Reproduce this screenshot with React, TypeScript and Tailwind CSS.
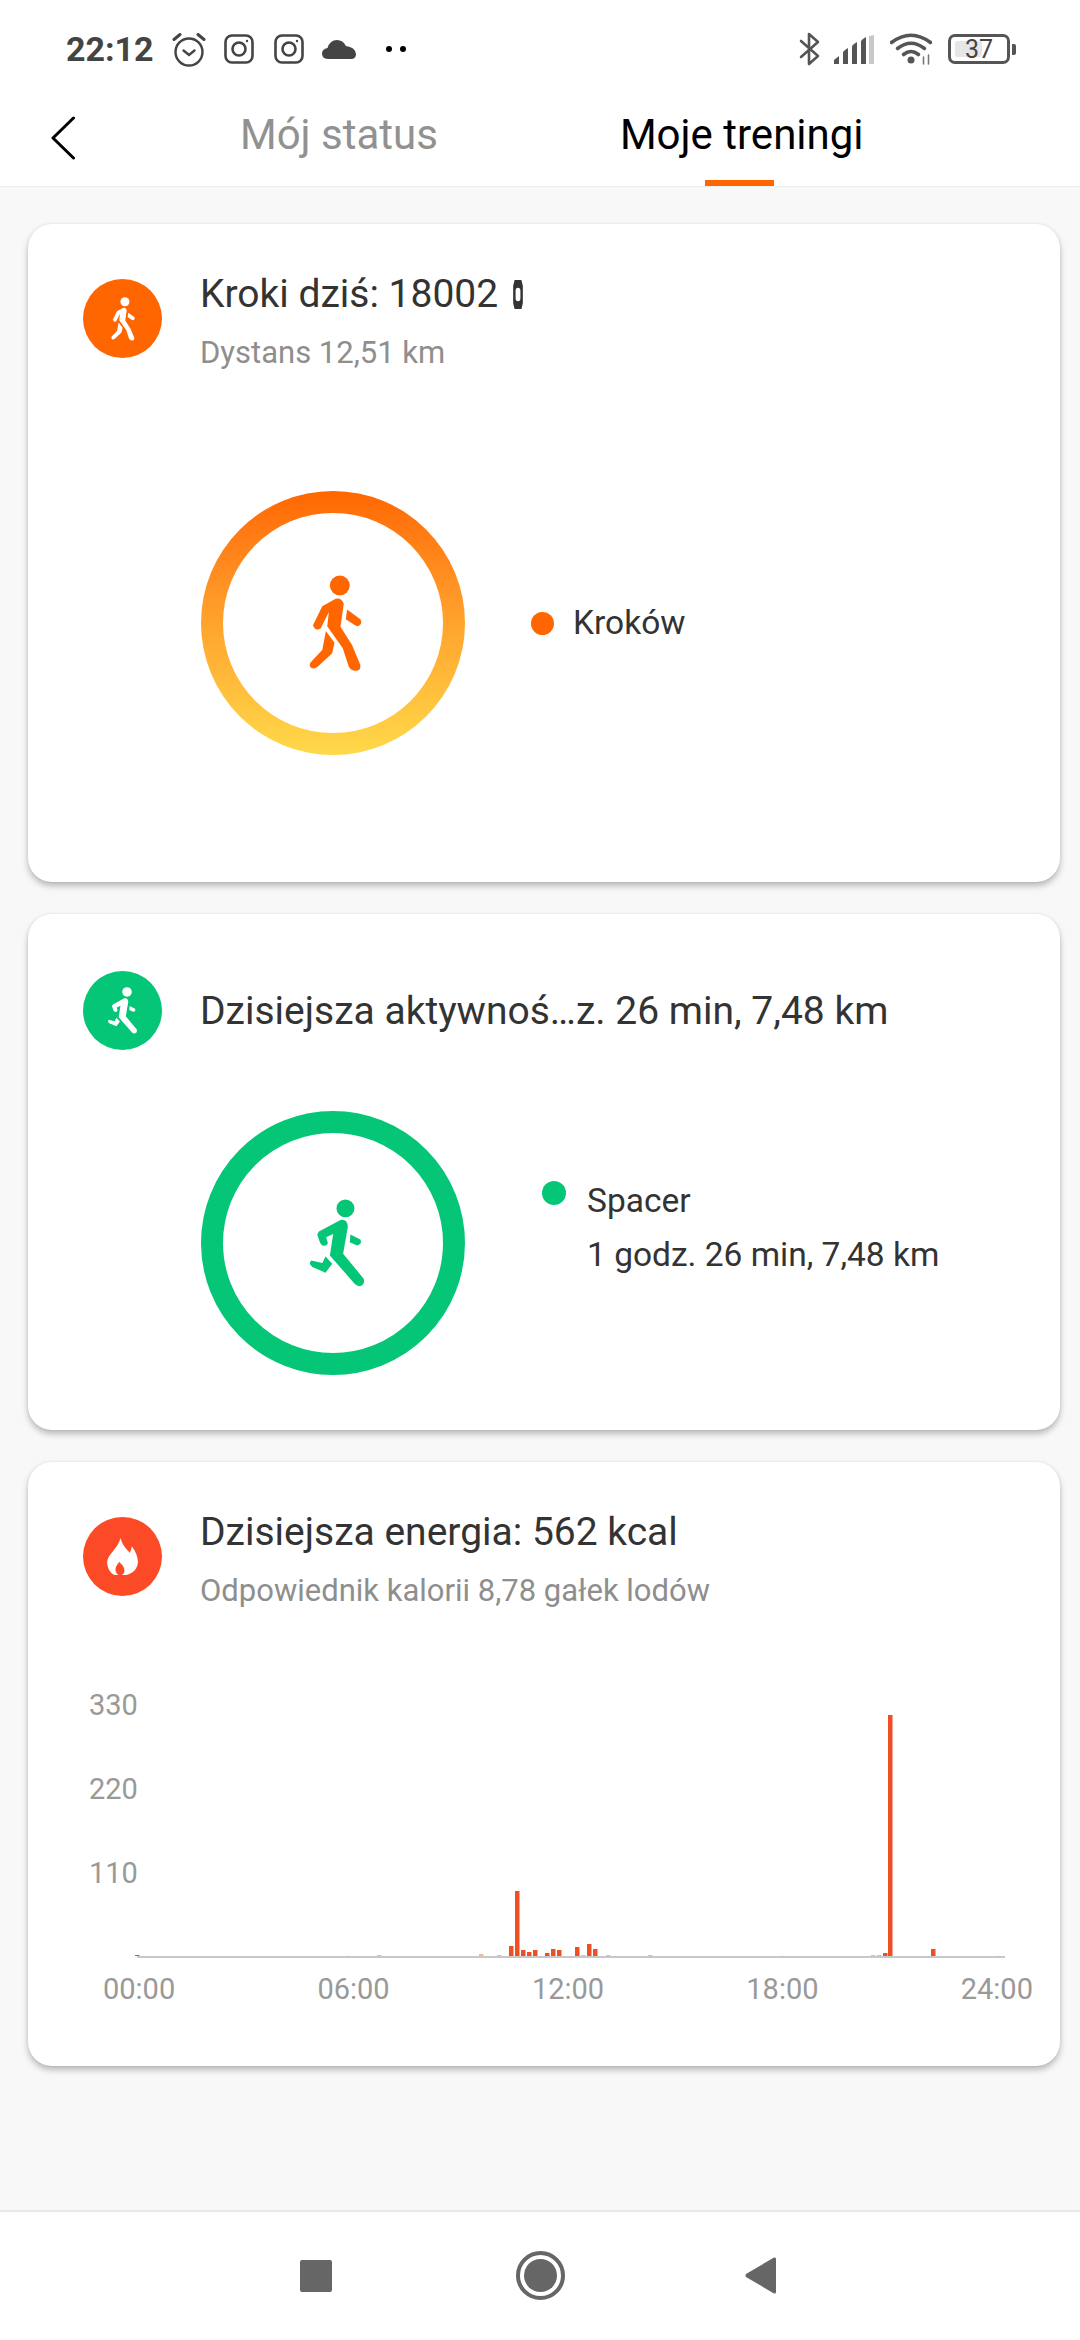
const bars: [number, number, string?][] = [
  [135, 1, '#f04e23'], [377, 1, '#f8b5a3'],
  [479, 2, '#f8b5a3'], [497, 1, '#f8b5a3'], [509, 10], [515, 65], [521, 6], [527, 4], [533, 6], [545, 3], [551, 7], [557, 6],
  [575, 9], [581, 1, '#f8b5a3'], [587, 12], [593, 7], [606, 1, '#f8b5a3'], [648, 1, '#f8b5a3'],
  [871, 1, '#f8b5a3'], [877, 1, '#f8b5a3'], [883, 3], [888, 241], [931, 7],
];

function Walker({ className, fill }: { className: string; fill: string }) {
  return (
    <svg viewBox="385 315 160 290" className={className} fill={fill}>
      <circle cx="478" cy="345" r="30" />
      <path d="M460 388Q480 378 490 400L480 470L515 525L540 585Q542 603 525 603Q512 603 505 590L487 535L440 468L445 425L420 475Q405 485 397 465L425 408Z" />
      <path d="M436 483L462 518L455 550L412 590Q395 603 387 588Q387 578 395 572L425 540Z" />
      <path d="M500 418L540 447Q548 462 532 468L525 466L496 447Z" />
    </svg>
  );
}

function Runner({ className, fill }: { className: string; fill: string }) {
  return (
    <svg viewBox="742 745 175 265" className={className} fill={fill}>
      <circle cx="855" cy="773" r="27" />
      <path d="M775 843L840 808Q862 805 862 830L848 910L910 985Q915 1005 897 1008Q888 1007 882 1000L808 915L818 850L797 860L802 878Q798 888 785 885Q778 880 776 870L770 852Z" />
      <path d="M795 918L815 940L795 967L755 950Q742 940 752 930L785 938Z" />
      <path d="M870 852L900 867Q907 880 890 885L868 875Z" />
    </svg>
  );
}

function Instagram() {
  return (
    <svg viewBox="0 0 30 30" className="w-[30px] h-[30px]" fill="none" stroke="#444" strokeWidth="2.6">
      <rect x="1.5" y="1.5" width="27" height="27" rx="6.5" />
      <circle cx="15" cy="15" r="6.5" />
      <circle cx="23" cy="7" r="1.2" fill="#444" stroke="none" />
    </svg>
  );
}

function StatusBar() {
  return (
    <div className="h-[98px] flex items-center pl-[66px] pr-[64px] justify-between">
      <div className="flex items-center">
        <span className="text-[34px] font-bold leading-none text-[#444] w-[106px]">22:12</span>
        <svg viewBox="0 0 34 35" className="w-[34px] h-[35px]" fill="none" stroke="#444" strokeWidth="2.4" strokeLinecap="round">
          <circle cx="17" cy="20" r="13.5" />
          <path d="M11.5 18.5L17 23L22.5 18.5" />
          <path d="M2 7.5L8 2.5M32 7.5L26 2.5" strokeWidth="3" />
        </svg>
        <div className="ml-[18px]"><Instagram /></div>
        <div className="ml-[20px]"><Instagram /></div>
        <svg viewBox="0 0 34 20" className="ml-[18px] w-[34px] h-[20px]" fill="#444">
          <path d="M7 20Q0 20 0 14.5Q0 10 5.5 9Q8 1 15 1Q21 1 24 7Q33 8 34 15Q34 20 29 20Z" />
        </svg>
        <div className="ml-[30px] flex gap-[8px]">
          <div className="w-[6px] h-[6px] rounded-full bg-black" />
          <div className="w-[6px] h-[6px] rounded-full bg-black" />
        </div>
      </div>
      <div className="flex items-center">
        <svg viewBox="0 0 21 34" className="w-[21px] h-[34px]" fill="none" stroke="#555" strokeWidth="2.6" strokeLinejoin="round" strokeLinecap="round">
          <path d="M2 9L19 24L10 32V2L19 10L2 25" />
        </svg>
        <svg viewBox="0 0 40 29" className="ml-[14px] w-[40px] h-[29px]" fill="#555">
          <path d="M0 29V25L5 21V29ZM9 29V18Q9 16 11 15L14 13V29ZM18 29V12Q18 10 20 9L23 7V29ZM27 29V7Q27 5 29 4L32 2V29Z" />
          <path d="M35 29V1L40 0V29Z" fill="#c8c8c8" />
        </svg>
        <svg viewBox="0 0 42 32" className="ml-[16px] w-[42px] h-[32px]" fill="none" stroke="#555" strokeWidth="3.6" strokeLinecap="round">
          <path d="M1.5 9.5Q21 -5 40.5 9.5" />
          <path d="M7.5 15.5Q21 5 34.5 15.5" />
          <path d="M13.5 21.5Q21 15.5 28.5 21.5" />
          <circle cx="21" cy="27" r="3.5" fill="#555" stroke="none" />
          <path d="M33.5 24V31M38.5 22V31" stroke="#777" strokeWidth="1.6" />
        </svg>
        <div className="ml-[16px] flex items-center">
          <div className="relative w-[62px] h-[30px] rounded-[7px] border-[3.5px] border-[#555] flex items-center justify-center">
            <div className="absolute left-[4px] top-[4px] bottom-[4px] w-[27px] rounded-[2px] bg-[#e6e6e6]" />
            <span className="relative text-[25px] leading-none text-[#444]">37</span>
          </div>
          <div className="ml-[2px] w-[4px] h-[11px] rounded-r-[2px] bg-[#555]" />
        </div>
      </div>
    </div>
  );
}

function Header() {
  return (
    <div className="h-[89px] flex border-b-[1px] border-[#eeeeee] bg-white">
      <svg viewBox="0 0 24 44" className="ml-[51px] mt-[18px] w-[24px] h-[44px]" fill="none" stroke="#000" strokeWidth="3" strokeLinecap="round" strokeLinejoin="round">
        <path d="M22.5 2L2 22L22.5 42" />
      </svg>
      <div className="ml-[165px] mt-[12px] text-[42px] leading-[50px] text-[#919191]">Mój status</div>
      <div className="ml-[182px] relative">
        <div className="mt-[12px] text-[42px] leading-[50px] text-black">Moje treningi</div>
        <div className="absolute left-[85px] bottom-0 w-[69px] h-[6px] bg-[#ff6600]" />
      </div>
    </div>
  );
}

function CardHead({ color, icon, title, sub }: { color: string; icon: React.ReactNode; title: React.ReactNode; sub?: string }) {
  return (
    <div className="flex">
      <div className="w-[79px] h-[79px] rounded-full flex items-center justify-center shrink-0" style={{ backgroundColor: color }}>
        {icon}
      </div>
      <div className={sub ? 'ml-[38px] -mt-[7px]' : 'ml-[38px] mt-[18px]'}>
        <div className="text-[39px] leading-[44px] text-[#333]">{title}</div>
        {sub && <div className="mt-[19px] text-[31px] leading-[36px] text-[#8e8e8e]">{sub}</div>}
      </div>
    </div>
  );
}

export default function App() {
  return (
    <div className="w-[1080px] h-[2340px] flex flex-col bg-[#f8f8f8] [font-family:Roboto,sans-serif]">
      <div className="bg-white">
        <StatusBar />
        <Header />
      </div>

      <div className="flex-1 pt-[37px]">
        <div className="ml-[28px] mr-[20px] bg-white rounded-[24px] shadow-[0_4px_6px_rgba(0,0,0,0.25),0_0_3px_rgba(0,0,0,0.08)] h-[658px] pt-[55px] pl-[55px]">
          <CardHead
            color="#ff6600"
            icon={<Walker className="w-[24px] h-[44px]" fill="#fff" />}
            title={
              <span className="flex items-center">
                Kroki dziś: 18002
                <svg viewBox="0 0 10 30" className="ml-[15px] w-[10px] h-[29px]" fill="#333">
                  <path fillRule="evenodd" d="M1.5 0H8.5L10 6V24L8.5 30H1.5L0 24V6ZM5 8Q2.5 8 2.5 11V19Q2.5 22 5 22Q7.5 22 7.5 19V11Q7.5 8 5 8Z" />
                </svg>
              </span>
            }
            sub="Dystans 12,51 km"
          />
          <div className="mt-[120px] ml-[118px] flex items-center">
            <div className="w-[264px] h-[264px] rounded-full bg-gradient-to-b from-[#ff6600] to-[#ffd94a] p-[22px]">
              <div className="w-full h-full rounded-full bg-white flex items-center justify-center">
                <Walker className="ml-[4px] w-[53px] h-[97px]" fill="#ff6600" />
              </div>
            </div>
            <div className="ml-[66px] w-[23px] h-[23px] rounded-full bg-[#ff6600]" />
            <div className="ml-[19px] text-[33.5px] leading-[40px] text-[#333]">Kroków</div>
          </div>
        </div>

        <div className="ml-[28px] mr-[20px] bg-white rounded-[24px] shadow-[0_4px_6px_rgba(0,0,0,0.25),0_0_3px_rgba(0,0,0,0.08)] mt-[32px] h-[516px] pt-[57px] pl-[55px]">
          <CardHead
            color="#05c677"
            icon={<Runner className="w-[31px] h-[47px]" fill="#fff" />}
            title="Dzisiejsza aktywnoś…z. 26 min, 7,48 km"
          />
          <div className="mt-[61px] ml-[118px] flex items-start">
            <div className="w-[264px] h-[264px] rounded-full border-[22px] border-[#05c677] flex items-center justify-center">
              <Runner className="ml-[8px] w-[58px] h-[88px]" fill="#05c677" />
            </div>
            <div className="ml-[77px] mt-[70px] w-[24px] h-[24px] rounded-full bg-[#05c677]" />
            <div className="ml-[21px] mt-[70px] text-[#333]">
              <div className="text-[33.5px] leading-[40px]">Spacer</div>
              <div className="mt-[14px] text-[33.5px] leading-[40px]">1 godz. 26 min, 7,48 km</div>
            </div>
          </div>
        </div>

        <div className="ml-[28px] mr-[20px] bg-white rounded-[24px] shadow-[0_4px_6px_rgba(0,0,0,0.25),0_0_3px_rgba(0,0,0,0.08)] mt-[32px] h-[604px] pt-[55px] pl-[55px]">
          <CardHead
            color="#fc4a26"
            icon={
              <svg viewBox="143 147 92 111" className="w-[31px] h-[37px]">
                <path fill="#fff" d="M183 147C190 175 208 185 211 192C214 185 216 178 217 172C230 190 236 205 235 222C232 245 215 255 200 258L165 258C150 250 143 235 143 218C145 195 175 180 183 147Z" />
                <path fill="#fc4a26" d="M180 218C172 228 164 238 170 250C172 256 176 258 178 258L186 258C196 254 198 242 190 230C186 225 182 222 180 218Z" />
              </svg>
            }
            title="Dzisiejsza energia: 562 kcal"
            sub="Odpowiednik kalorii 8,78 gałek lodów"
          />
          <div className="relative mt-[81px] ml-[6px] h-[268px] w-[951px]">
            <div className="flex flex-col gap-[54px] text-[29px] leading-[30px] text-[#999]">
              <span>330</span>
              <span>220</span>
              <span>110</span>
            </div>
            <svg viewBox="89 1690 951 270" className="absolute left-0 top-0 w-[951px] h-[270px]">
              <rect x="137" y="1956" width="868" height="2" fill="#c8c8c8" />
              <path d="M348 1955v1M782 1955v1M998 1955v1" stroke="#ddd" />
              {bars.map(([x, h, c]) => (
                <rect key={x} x={x} y={1956 - h} width="4.5" height={h} fill={c ?? '#f04e23'} />
              ))}
            </svg>
          </div>
          <div className="mt-[14px] ml-[20px] w-[930px] flex justify-between text-[29px] leading-[34px] text-[#999]">
            <span>00:00</span>
            <span>06:00</span>
            <span>12:00</span>
            <span>18:00</span>
            <span>24:00</span>
          </div>
        </div>
      </div>

      <div className="h-[130px] bg-white border-t-2 border-[#e8e8e8]">
        <div className="flex items-start pt-[39px]">
          <div className="ml-[300px] mt-[9px] w-[32px] h-[32px] rounded-[2px] bg-[#666]" />
          <div className="ml-[184px] w-[49px] h-[49px] rounded-full border-[4px] border-[#666] flex items-center justify-center">
            <div className="w-[33px] h-[33px] rounded-full bg-[#666]" />
          </div>
          <svg viewBox="0 0 31 37" className="ml-[180px] mt-[6px] w-[31px] h-[37px]" fill="#666">
            <path d="M29 0.5Q31 0 31 2V35Q31 37 29 36.5L1 20Q0 18.5 1 17Z" />
          </svg>
        </div>
      </div>
    </div>
  );
}
